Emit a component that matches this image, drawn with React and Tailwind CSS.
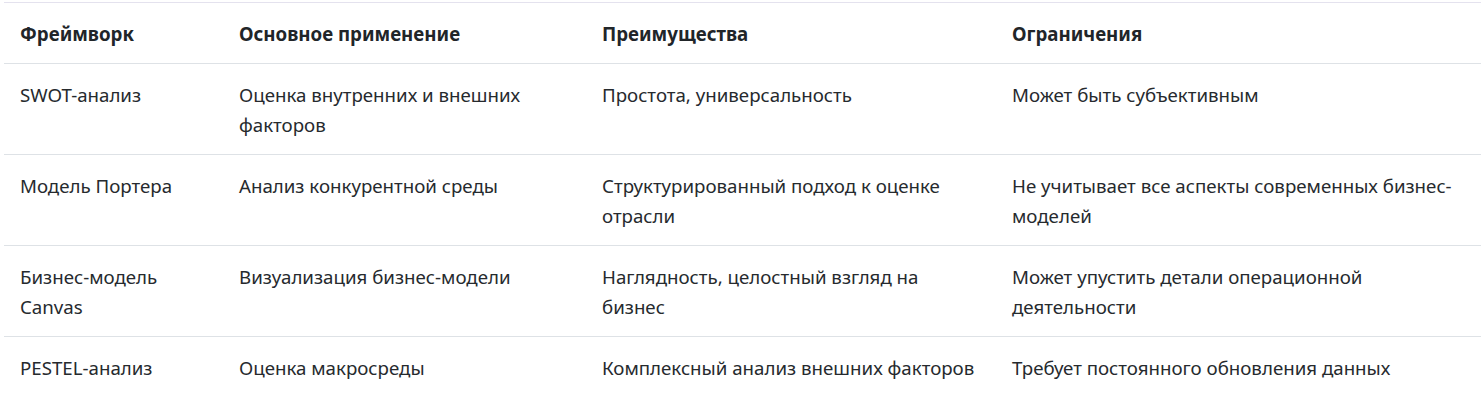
const rows = [
  {
    name: "SWOT-анализ",
    use: "Оценка внутренних и внешних факторов",
    pros: "Простота, универсальность",
    cons: "Может быть субъективным",
  },
  {
    name: "Модель Портера",
    use: "Анализ конкурентной среды",
    pros: "Структурированный подход к оценке отрасли",
    cons: "Не учитывает все аспекты современных бизнес-моделей",
  },
  {
    name: "Бизнес-модель Canvas",
    use: "Визуализация бизнес-модели",
    pros: "Наглядность, целостный взгляд на бизнес",
    cons: "Может упустить детали операционной деятельности",
  },
  {
    name: "PESTEL-анализ",
    use: "Оценка макросреды",
    pros: "Комплексный анализ внешних факторов",
    cons: "Требует постоянного обновления данных",
  },
];

export default function App() {
  return (
    <div className="bg-white pl-1 pt-[2px] font-['Noto_Sans',sans-serif] text-[18.7px] leading-[30px] text-[#212529]">
      <table className="w-full table-fixed border-collapse text-left">
        <colgroup>
          <col className="w-[219px]" />
          <col className="w-[363px]" />
          <col className="w-[410px]" />
          <col />
        </colgroup>
        <thead>
          <tr className="border-t border-b border-t-[#e4e2ee] border-b-[#dee2e6]">
            <th className="px-4 pt-4 pb-[14px] font-bold">Фреймворк</th>
            <th className="px-4 pt-4 pb-[14px] font-bold">Основное применение</th>
            <th className="px-4 pt-4 pb-[14px] font-bold">Преимущества</th>
            <th className="px-4 pt-4 pb-[14px] font-bold">Ограничения</th>
          </tr>
        </thead>
        <tbody className="text-[#262a2e]">
          {rows.map((r) => (
            <tr key={r.name} className="border-b border-[#dee2e6] align-top last:border-b-0">
              <td className="px-4 pt-4 pb-[14px]">{r.name}</td>
              <td className="px-4 pt-4 pb-[14px]">{r.use}</td>
              <td className="px-4 pt-4 pb-[14px]">{r.pros}</td>
              <td className="px-4 pt-4 pb-[14px]">{r.cons}</td>
            </tr>
          ))}
        </tbody>
      </table>
    </div>
  );
}
